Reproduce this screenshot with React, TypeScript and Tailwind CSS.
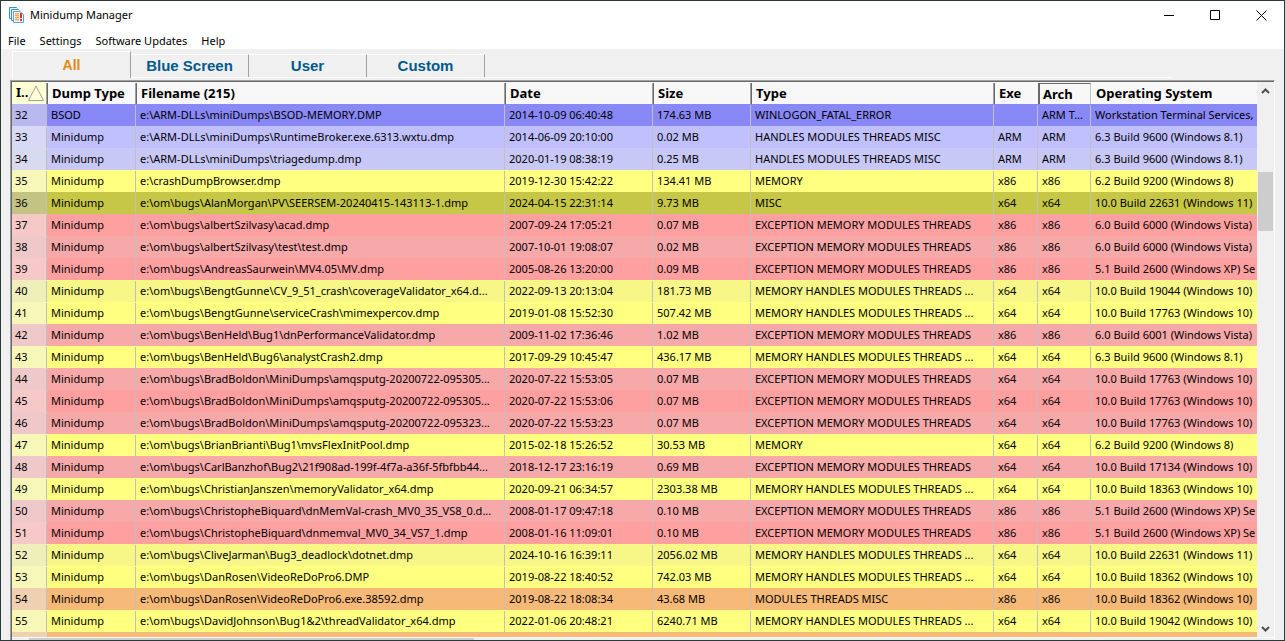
import clsx from 'clsx';

type Tone = 'bsod' | 'blue' | 'yellow' | 'olive' | 'red' | 'orange';

interface Dump {
  id: number;
  kind: string;
  file: string;
  date: string;
  size: string;
  type: string;
  exe: string;
  arch: string;
  os: string;
  tone: Tone;
}

// Long values are already shortened to the column width
const MHT = 'MEMORY HANDLES MODULES THREADS ...';
const EMT = 'EXCEPTION MEMORY MODULES THREADS';
const HMT = 'HANDLES MODULES THREADS MISC';

const row = (
  id: number, tone: Tone, file: string, date: string, size: string,
  type: string, exe: string, os: string, arch = exe, kind = 'Minidump'
): Dump => ({ id, tone, file, date, size, type, exe, os, arch, kind });

const dumps: Dump[] = [
  row(32, 'bsod', 'e:\\ARM-DLLs\\miniDumps\\BSOD-MEMORY.DMP', '2014-10-09 06:40:48', '174.63 MB', 'WINLOGON_FATAL_ERROR', '', 'Workstation Terminal Services,', 'ARM T...', 'BSOD'),
  row(33, 'blue', 'e:\\ARM-DLLs\\miniDumps\\RuntimeBroker.exe.6313.wxtu.dmp', '2014-06-09 20:10:00', '0.02 MB', HMT, 'ARM', '6.3 Build 9600 (Windows 8.1)'),
  row(34, 'blue', 'e:\\ARM-DLLs\\miniDumps\\triagedump.dmp', '2020-01-19 08:38:19', '0.25 MB', HMT, 'ARM', '6.3 Build 9600 (Windows 8.1)'),
  row(35, 'yellow', 'e:\\crashDumpBrowser.dmp', '2019-12-30 15:42:22', '134.41 MB', 'MEMORY', 'x86', '6.2 Build 9200 (Windows 8)'),
  row(36, 'olive', 'e:\\om\\bugs\\AlanMorgan\\PV\\SEERSEM-20240415-143113-1.dmp', '2024-04-15 22:31:14', '9.73 MB', 'MISC', 'x64', '10.0 Build 22631 (Windows 11)'),
  row(37, 'red', 'e:\\om\\bugs\\albertSzilvasy\\acad.dmp', '2007-09-24 17:05:21', '0.07 MB', EMT, 'x86', '6.0 Build 6000 (Windows Vista)'),
  row(38, 'red', 'e:\\om\\bugs\\albertSzilvasy\\test\\test.dmp', '2007-10-01 19:08:07', '0.02 MB', EMT, 'x86', '6.0 Build 6000 (Windows Vista)'),
  row(39, 'red', 'e:\\om\\bugs\\AndreasSaurwein\\MV4.05\\MV.dmp', '2005-08-26 13:20:00', '0.09 MB', EMT, 'x86', '5.1 Build 2600 (Windows XP) Se'),
  row(40, 'yellow', 'e:\\om\\bugs\\BengtGunne\\CV_9_51_crash\\coverageValidator_x64.d...', '2022-09-13 20:13:04', '181.73 MB', MHT, 'x64', '10.0 Build 19044 (Windows 10)'),
  row(41, 'yellow', 'e:\\om\\bugs\\BengtGunne\\serviceCrash\\mimexpercov.dmp', '2019-01-08 15:52:30', '507.42 MB', MHT, 'x64', '10.0 Build 17763 (Windows 10)'),
  row(42, 'red', 'e:\\om\\bugs\\BenHeld\\Bug1\\dnPerformanceValidator.dmp', '2009-11-02 17:36:46', '1.02 MB', EMT, 'x86', '6.0 Build 6001 (Windows Vista)'),
  row(43, 'yellow', 'e:\\om\\bugs\\BenHeld\\Bug6\\analystCrash2.dmp', '2017-09-29 10:45:47', '436.17 MB', MHT, 'x64', '6.3 Build 9600 (Windows 8.1)'),
  row(44, 'red', 'e:\\om\\bugs\\BradBoldon\\MiniDumps\\amqsputg-20200722-095305...', '2020-07-22 15:53:05', '0.07 MB', EMT, 'x64', '10.0 Build 17763 (Windows 10)'),
  row(45, 'red', 'e:\\om\\bugs\\BradBoldon\\MiniDumps\\amqsputg-20200722-095305...', '2020-07-22 15:53:06', '0.07 MB', EMT, 'x64', '10.0 Build 17763 (Windows 10)'),
  row(46, 'red', 'e:\\om\\bugs\\BradBoldon\\MiniDumps\\amqsputg-20200722-095323...', '2020-07-22 15:53:23', '0.07 MB', EMT, 'x64', '10.0 Build 17763 (Windows 10)'),
  row(47, 'yellow', 'e:\\om\\bugs\\BrianBrianti\\Bug1\\mvsFlexInitPool.dmp', '2015-02-18 15:26:52', '30.53 MB', 'MEMORY', 'x64', '6.2 Build 9200 (Windows 8)'),
  row(48, 'red', 'e:\\om\\bugs\\CarlBanzhof\\Bug2\\21f908ad-199f-4f7a-a36f-5fbfbb44...', '2018-12-17 23:16:19', '0.69 MB', EMT, 'x64', '10.0 Build 17134 (Windows 10)'),
  row(49, 'yellow', 'e:\\om\\bugs\\ChristianJanszen\\memoryValidator_x64.dmp', '2020-09-21 06:34:57', '2303.38 MB', MHT, 'x64', '10.0 Build 18363 (Windows 10)'),
  row(50, 'red', 'e:\\om\\bugs\\ChristopheBiquard\\dnMemVal-crash_MV0_35_VS8_0.d...', '2008-01-17 09:47:18', '0.10 MB', EMT, 'x86', '5.1 Build 2600 (Windows XP) Se'),
  row(51, 'red', 'e:\\om\\bugs\\ChristopheBiquard\\dnmemval_MV0_34_VS7_1.dmp', '2008-01-16 11:09:01', '0.10 MB', EMT, 'x86', '5.1 Build 2600 (Windows XP) Se'),
  row(52, 'yellow', 'e:\\om\\bugs\\CliveJarman\\Bug3_deadlock\\dotnet.dmp', '2024-10-16 16:39:11', '2056.02 MB', MHT, 'x64', '10.0 Build 22631 (Windows 11)'),
  row(53, 'yellow', 'e:\\om\\bugs\\DanRosen\\VideoReDoPro6.DMP', '2019-08-22 18:40:52', '742.03 MB', MHT, 'x64', '10.0 Build 18362 (Windows 10)'),
  row(54, 'orange', 'e:\\om\\bugs\\DanRosen\\VideoReDoPro6.exe.38592.dmp', '2019-08-22 18:08:34', '43.68 MB', 'MODULES THREADS MISC', 'x86', '10.0 Build 18362 (Windows 10)'),
  row(55, 'yellow', 'e:\\om\\bugs\\DavidJohnson\\Bug1&2\\threadValidator_x64.dmp', '2022-01-06 20:48:21', '6240.71 MB', MHT, 'x64', '10.0 Build 19042 (Windows 10)'),
];

// [odd row, odd index cell, even row, even index cell]
const tones: Record<Tone, [string, string, string, string]> = {
  bsod: ['bg-[#8888f7]', 'bg-[#b9b9ef]', 'bg-[#8888f7]', 'bg-[#b9b9ef]'],
  blue: ['bg-[#c0c0ff]', 'bg-[#d8d8f7]', 'bg-[#c8c8f7]', 'bg-[#d9d9ef]'],
  yellow: ['bg-[#ffff80]', 'bg-[#f7f7b8]', 'bg-[#f7f788]', 'bg-[#efefb9]'],
  olive: ['bg-[#c7c747]', 'bg-[#c3c384]', 'bg-[#c7c747]', 'bg-[#c3c384]'],
  red: ['bg-[#ffa0a0]', 'bg-[#f7c8c8]', 'bg-[#f7a8a8]', 'bg-[#efc9c9]'],
  orange: ['bg-[#f7b978]', 'bg-[#efd1b1]', 'bg-[#f7b978]', 'bg-[#efd1b1]'],
};

const menus = ['File', 'Settings', 'Software Updates', 'Help'];

const headers = ['Dump Type', 'Filename (215)', 'Date', 'Size', 'Type', 'Exe', 'Arch', 'Operating System'];

const headerBorder = (name: string) => {
  if (name === 'Arch') return 'border-t border-l-2 border-r border-t-[#696969] border-l-[#696969] border-r-[#c0c0c0] pl-[3px] leading-5';
  if (name === 'Operating System') return 'border-l border-white pl-1';
  if (name === 'Exe') return 'border-l border-[#696969] pl-1';
  return 'border-l border-r border-l-[#696969] border-r-[#a0a0a0] pl-1';
};

const AppIcon = () => (
  <svg width="16" height="16" viewBox="0 0 16 16" fill="none" aria-hidden="true">
    <path d="M2.500 11.500h-2V.5h7l1 1" fill="#e8f3fa" stroke="#3b8fc8" />
    <path d="M4.500 13.500h-2v-11h7l1 1" fill="#e8f3fa" stroke="#3b8fc8" />
    <path d="M4.500 4.500h6.500l3.500 3v8h-10z" fill="#fff" stroke="#5aa2d2" />
    <path d="M6 6h4v8H6z" fill="#fbd9b0" />
    <path d="M6 6.500h4M6 8.500h4M6 10.500h4M6 12.500h4" stroke="#f3a455" />
    <path d="M12 6v5M12 12v2" stroke="#d8352a" strokeWidth="2" />
  </svg>
);

const Cell = ({ text, last }: { text: string; last?: boolean }) => (
  <td className="p-0">
    <div className={clsx('h-[21px] overflow-hidden pl-1 leading-5 whitespace-nowrap', !last && 'border-r border-[#c0c0c0]')}>
      {text}
    </div>
  </td>
);

export default function App() {
  return (
    <div className="flex h-screen flex-col overflow-hidden border border-[#30393a] bg-[#f0f0f0] font-['Noto_Sans',sans-serif] text-black">
      {/* Title bar */}
      <header className="flex h-7 shrink-0 items-center bg-white pl-2">
        <AppIcon />
        <h1 className="ml-[5px] text-[11px]">Minidump Manager</h1>
        <div className="ml-auto flex">
          <button aria-label="Minimize" className="flex h-7 w-[46px] items-center justify-center">
            <svg width="10" height="10"><path d="M0 5.500h10" stroke="#000" /></svg>
          </button>
          <button aria-label="Maximize" className="flex h-7 w-[46px] items-center justify-center">
            <svg width="10" height="10"><path d="M.5.5h9v9h-9z" fill="none" stroke="#000" /></svg>
          </button>
          <button aria-label="Close" className="flex h-7 w-[46px] items-center justify-center">
            <svg width="11" height="11"><path d="M.5.5l10 10M10.500.5l-10 10" stroke="#000" /></svg>
          </button>
        </div>
      </header>

      <nav className="flex h-5 shrink-0 items-end gap-3.5 bg-white pl-[7px] text-[11px] leading-4">
        {menus.map((menu) => (
          <button key={menu}>{menu}</button>
        ))}
      </nav>

      {/* Filter tabs */}
      <div role="tablist" className="mt-0.5 mr-[112px] ml-[11px] flex h-[27px] shrink-0 font-['Liberation_Sans',sans-serif] text-[15px] font-bold text-[#005a8c]">
        <button role="tab" aria-selected="true" className="w-[119px] border-t border-r border-l border-white border-r-[#a0a0a0] text-sm text-[#e08a10]">
          All
        </button>
        <div className="flex flex-1 items-end border-b border-white">
          {['Blue Screen', 'User', 'Custom'].map((tab) => (
            <button key={tab} role="tab" aria-selected="false" className="h-[23px] w-[118px] border-t border-r border-t-white border-r-[#a0a0a0]">
              {tab}
            </button>
          ))}
        </div>
      </div>

      <main className="mx-[9px] mt-0.5 flex min-h-0 flex-1 border-t border-r border-l border-[#a0a0a0] border-r-white">
        <div className="flex min-w-0 flex-1 flex-col border-t border-l border-[#696969]">
          <div className="flex min-h-0 flex-1">
            <div className="min-w-0 flex-1 overflow-hidden">
              <table className="w-full table-fixed border-collapse text-left text-[11px]">
                <colgroup>
                  <col className="w-[35px]" />
                  <col className="w-[89px]" />
                  <col className="w-[369px]" />
                  <col className="w-[148px]" />
                  <col className="w-[98px]" />
                  <col className="w-[243px]" />
                  <col className="w-[44px]" />
                  <col className="w-[53px]" />
                  <col />
                </colgroup>
                <thead>
                  <tr className="h-[22px] bg-[#f8f8f8] text-[13px]">
                    <th className="bg-[#ffffd5] p-0">
                      <div className="flex h-[21px] items-center border-r border-[#a0a0a0] pl-1">
                        I..
                        <svg width="16" height="16" viewBox="0 0 16 16" aria-hidden="true">
                          <path d="M8 1L15.500 15.500H.5z" fill="none" stroke="#a0a0a0" />
                        </svg>
                      </div>
                    </th>
                    {headers.map((name) => (
                      <th key={name} className="p-0">
                        <div className={clsx('h-[21px] overflow-hidden leading-[21px] whitespace-nowrap', headerBorder(name))}>
                          {name}
                        </div>
                      </th>
                    ))}
                  </tr>
                </thead>
                <tbody>
                  {dumps.map((d) => {
                    const tone = tones[d.tone];
                    const even = d.id % 2 === 0;
                    return (
                      <tr key={d.id} className={clsx('h-[22px]', even ? tone[2] : tone[0])}>
                        <td className={clsx('p-0', even ? tone[3] : tone[1])}>
                          <div className="h-[21px] border-r border-[#c0c0c0] pl-[3px] leading-5">{d.id}</div>
                        </td>
                        <Cell text={d.kind} />
                        <Cell text={d.file} />
                        <Cell text={d.date} />
                        <Cell text={d.size} />
                        <Cell text={d.type} />
                        <Cell text={d.exe} />
                        <Cell text={d.arch} />
                        <Cell text={d.os} last />
                      </tr>
                    );
                  })}
                  <tr className="h-[22px] bg-[#f7b978]">
                    <td className="bg-[#efd1b1]" />
                    <td colSpan={8} />
                  </tr>
                </tbody>
              </table>
            </div>

            {/* Vertical scrollbar */}
            <div className="flex w-[17px] shrink-0 flex-col items-center bg-[#f0f0f0]">
              <button aria-label="Scroll up" className="flex h-[18px] w-full items-center justify-center">
                <svg width="9" height="6"><path d="M1 5l3.500-3.500L8 5" fill="none" stroke="#505050" strokeWidth="2" /></svg>
              </button>
              <div className="mt-[72px] h-[59px] w-[15px] bg-[#cdcdcd]" />
              <button aria-label="Scroll down" className="mt-auto flex h-4 w-full items-center justify-center">
                <svg width="9" height="6"><path d="M1 1l3.500 3.500L8 1" fill="none" stroke="#505050" strokeWidth="2" /></svg>
              </button>
            </div>
          </div>

          {/* Horizontal scrollbar */}
          <div className="h-[3px] shrink-0 border-t border-white bg-[#f0f0f0]">
            <div className="ml-[17px] h-0.5 w-[445px] bg-[#cdcdcd]" />
          </div>
        </div>
      </main>
    </div>
  );
}
